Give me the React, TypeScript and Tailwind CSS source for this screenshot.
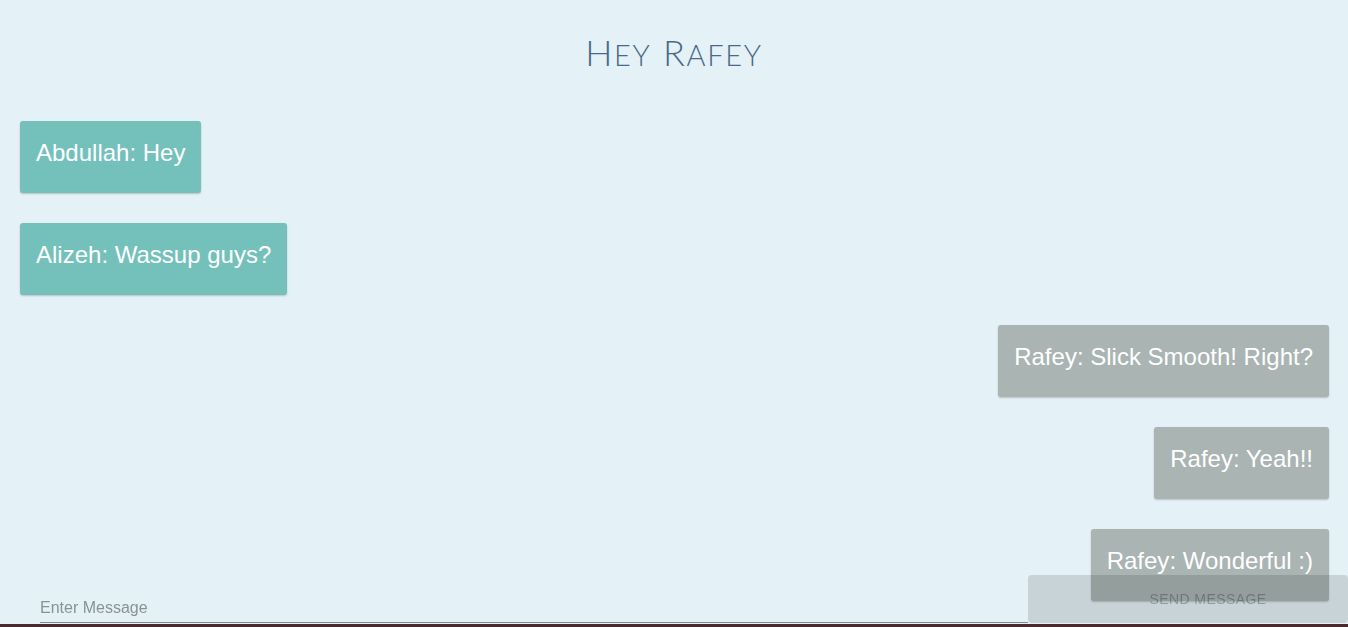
const messages = [
  { id: 1, author: "Abdullah", text: "Hey", mine: false },
  { id: 2, author: "Alizeh", text: "Wassup guys?", mine: false },
  { id: 3, author: "Rafey", text: "Slick Smooth! Right?", mine: true },
  { id: 4, author: "Rafey", text: "Yeah!!", mine: true },
  { id: 5, author: "Rafey", text: "Wonderful :)", mine: true },
]

export default function App() {
  return (
    <div className="relative h-[627px] overflow-hidden bg-[#e4f1f6] font-['Liberation_Sans',Arial,sans-serif]">
      {/* Title, hand-made small caps */}
      <h1 className="pt-[30px] text-center font-['Lato',sans-serif] text-[36px] leading-[44px] font-light tracking-[1.7px] text-[#4a6888] uppercase">
        H<span className="text-[29px]">ey</span> R<span className="text-[29px]">afey</span>
      </h1>

      {/* Messages */}
      <div className="mt-[44px] flex flex-col gap-[30px] pl-5 pr-[19px]">
        {messages.map((m) => (
          <div key={m.id} className={m.mine ? "flex justify-end" : "flex justify-start"}>
            <div
              className={
                "rounded-[3px] px-4 pt-[18px] pb-[26px] text-[24px] leading-[28px] text-white shadow-[0_1px_2px_rgba(0,0,0,0.2)] " +
                (m.mine ? "bg-[#a9b4b3]" : "bg-[#74c1bc]")
              }
            >
              {m.author}: {m.text}
            </div>
          </div>
        ))}
      </div>

      {/* Composer */}
      <div className="fixed bottom-0 left-0 right-0">
        <div className="flex h-[48px] items-end">
          <div className="flex-1 pl-10">
            <input
              placeholder="Enter Message"
              className="w-full border-b border-[#7f898b] bg-transparent pb-[4px] text-[16px] leading-[20px] outline-none placeholder:text-[#8a9294]"
            />
          </div>
          <button
            disabled
            className="flex h-[48px] w-[320px] items-center justify-center rounded-[4px] bg-black/[0.12] pl-10 text-[14px] tracking-[0.4px] text-black/[0.26] uppercase"
          >
            Send Message
          </button>
        </div>
        <div className="h-px" />
        <div className="h-[3px] bg-[#4a2a30]" />
      </div>
    </div>
  )
}
